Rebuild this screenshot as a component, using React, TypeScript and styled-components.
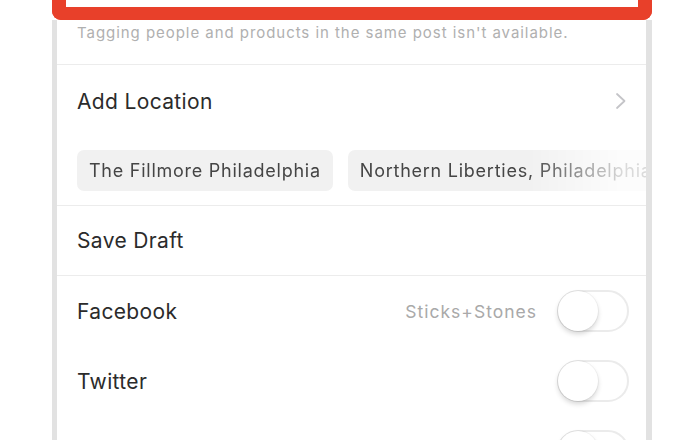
import styled, { createGlobalStyle } from "styled-components";

const GlobalStyle = createGlobalStyle`
  html, body {
    margin: 0;
    padding: 0;
    background: #ffffff;
    font-family: Inter, "Liberation Sans", sans-serif;
    -webkit-font-smoothing: antialiased;
  }
`;

const Page = styled.div`
  width: 692px;
  height: 440px;
  overflow: hidden;
  background: #ffffff;
`;

const Phone = styled.div`
  margin-left: 52px;
  width: 600px;
  display: flex;
  flex-direction: column;
`;

const Highlight = styled.div`
  height: 20px;
  box-sizing: border-box;
  border: 14px solid #e8402a;
  border-top: none;
  border-bottom-width: 13px;
  border-radius: 0 0 9px 9px;
  background: #ffffff;
`;

const Screen = styled.div`
  border-left: 5px solid #e2e2e2;
  border-right: 6px solid #e2e2e2;
  background: #ffffff;
  display: flex;
  flex-direction: column;
`;

const Note = styled.p`
  margin: 0;
  height: 45px;
  box-sizing: border-box;
  padding: 4px 20px 0;
  font-size: 15px;
  letter-spacing: 0.95px;
  color: #b0b0b0;
  border-bottom: 1px solid #ececec;
  line-height: 18px;
  white-space: nowrap;
`;

const Row = styled.div<{ $divider?: boolean; $height?: number }>`
  height: ${(p) => p.$height ?? 70}px;
  flex: none;
  box-sizing: border-box;
  padding: 0 17px 0 20px;
  display: flex;
  align-items: center;
  gap: 20px;
  border-bottom: ${(p) => (p.$divider ? "1px solid #ececec" : "none")};
`;

const Label = styled.span`
  flex: 1;
  font-size: 21px;
  letter-spacing: 0.35px;
  color: #2b2b2b;
`;

const Meta = styled.span`
  font-size: 17.5px;
  letter-spacing: 1px;
  color: #a9a9a9;
`;

const Chevron = styled.svg`
  width: 12px;
  height: 18px;
  margin-right: 2px;
`;

const Section = styled.div`
  display: flex;
  flex-direction: column;
  border-bottom: 1px solid #ececec;
`;

const Chips = styled.div`
  display: flex;
  gap: 15px;
  margin-top: 13px;
  padding: 0 0 14px 20px;
  overflow: hidden;
  -webkit-mask-image: linear-gradient(to right, #000 80%, rgba(0, 0, 0, 0.2) 96%);
  mask-image: linear-gradient(to right, #000 80%, rgba(0, 0, 0, 0.2) 96%);
`;

const Chip = styled.span`
  flex: none;
  height: 41px;
  display: flex;
  align-items: center;
  padding: 0 12px;
  border-radius: 7px;
  background: #f1f1f1;
  font-size: 18px;
  letter-spacing: 0.75px;
  color: #454545;
  white-space: nowrap;
`;

const Switch = styled.span`
  position: relative;
  flex: none;
  width: 72px;
  height: 42px;
  box-sizing: border-box;
  border-radius: 21px;
  border: 2px solid #ebebeb;
  background: #ffffff;

  &::after {
    content: "";
    position: absolute;
    left: -1px;
    top: -1px;
    width: 40px;
    height: 40px;
    border-radius: 50%;
    background: #ffffff;
    box-shadow: 0 3px 5px rgba(0, 0, 0, 0.16), 0 0 0 1px rgba(0, 0, 0, 0.04);
  }
`;

export default function App() {
  return (
    <Page>
      <GlobalStyle />
      <Phone>
        <Highlight />
        <Screen>
          <Note>Tagging people and products in the same post isn't available.</Note>
          <Section>
            <Row $height={72}>
              <Label>Add Location</Label>
              <Chevron viewBox="0 0 12 18">
                <path d="M2 2l7.5 7L2 16" fill="none" stroke="#c4c4c8" strokeWidth="1.8" strokeLinecap="round" strokeLinejoin="round" />
              </Chevron>
            </Row>
            <Chips>
              <Chip>The Fillmore Philadelphia</Chip>
              <Chip>Northern Liberties, Philadelphia</Chip>
            </Chips>
          </Section>
          <Row $divider>
            <Label>Save Draft</Label>
          </Row>
          <Row>
            <Label>Facebook</Label>
            <Meta>Sticks+Stones</Meta>
            <Switch />
          </Row>
          <Row>
            <Label>Twitter</Label>
            <Switch />
          </Row>
          <Row>
            <Label />
            <Switch />
          </Row>
        </Screen>
      </Phone>
    </Page>
  );
}
